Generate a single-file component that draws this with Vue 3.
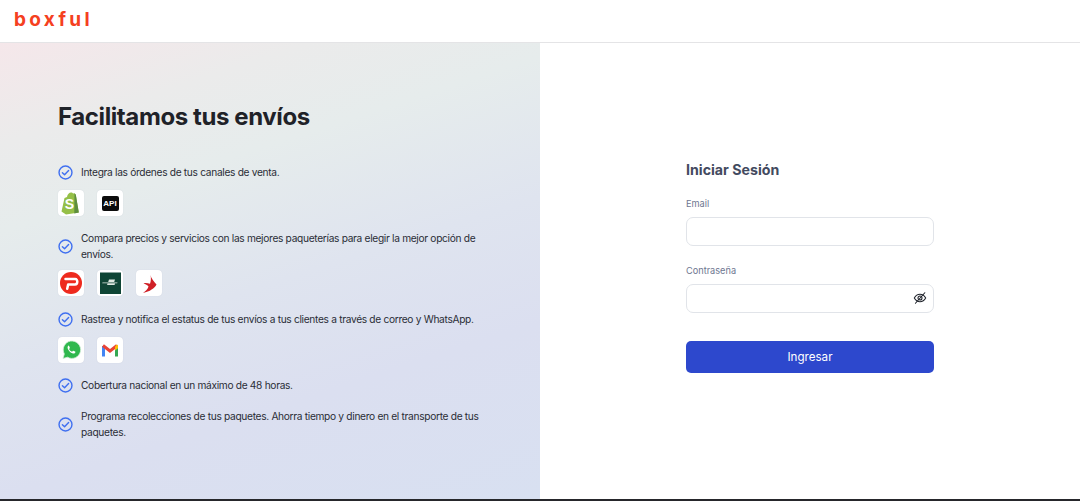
<script setup>
const checkItems = [
  { text: 'Integra las órdenes de tus canales de venta.', logos: ['shopify', 'api'] },
  {
    text: 'Compara precios y servicios con las mejores paqueterías para elegir la mejor opción de envíos.',
    logos: ['pedidos', 'green', 'swift'],
  },
  { text: 'Rastrea y notifica el estatus de tus envíos a tus clientes a través de correo y WhatsApp.', logos: ['whatsapp', 'gmail'] },
  { text: 'Cobertura nacional en un máximo de 48 horas.', logos: [] },
  { text: 'Programa recolecciones de tus paquetes. Ahorra tiempo y dinero en el transporte de tus paquetes.', logos: [] },
]
</script>

<template>
  <div class="page">
    <header class="topbar">
      <span class="logo">boxful</span>
    </header>
    <main class="split">
      <section class="promo">
        <h1 class="promo-title">Facilitamos tus envíos</h1>
        <ul class="features">
          <li v-for="item in checkItems" :key="item.text" class="feature">
            <div class="feature-row">
              <svg class="check" viewBox="0 0 16 16" fill="none">
                <circle cx="8" cy="8" r="6.9" stroke="#4070f0" stroke-width="1.5" />
                <path d="M4.700 8.200l2.300 2.300 4.300-4.600" stroke="#4070f0" stroke-width="1.5" stroke-linecap="round" stroke-linejoin="round" />
              </svg>
              <p class="feature-text">{{ item.text }}</p>
            </div>
            <div v-if="item.logos.length" class="logos">
              <span v-for="logo in item.logos" :key="logo" class="logo-tile">
                <svg v-if="logo === 'shopify'" viewBox="0 0 26 26" width="26" height="26">
                  <path d="M3.500 21.500L6.500 8l2.500-1C9.500 4 11.300 2.500 13 2.500c1 0 1.600.4 2 1l1.500-.3 1.300 1.500 3 17.800-12.800 2z" fill="#95bf47" />
                  <path d="M16.500 3.200l1.300 1.500 3 17.800-4.500 1z" fill="#5e8e3e" />
                  <text x="11.500" y="19" class="shopify-s">S</text>
                </svg>
                <span v-else-if="logo === 'api'" class="api-mark">API</span>
                <svg v-else-if="logo === 'pedidos'" viewBox="0 0 26 26" width="26" height="26">
                  <circle cx="13" cy="13" r="11" fill="#ee2a1e" />
                  <path d="M7.500 9h9.700c2.800 0 2.800 5.400-.2 5.400h-6.800M9.200 18.800l1-4.400" fill="none" stroke="#fff" stroke-width="2.500" stroke-linecap="round" stroke-linejoin="round" />
                </svg>
                <svg v-else-if="logo === 'green'" viewBox="0 0 26 26" width="26" height="26">
                  <rect x="3" y="2.500" width="21" height="21.500" fill="#0f4535" />
                  <path d="M12 9.500h6l-.8 2.500h-6zM5.500 12.500h15l-.3.7h-15zM10.500 13.500h7.500l-.4 1.500h-7.500z" fill="#dfe9e2" />
                </svg>
                <svg v-else-if="logo === 'swift'" viewBox="0 0 26 26" width="26" height="26">
                  <path d="M14.500 5c.3 3 3.500 6.500 6 9.500-2 3.800-6.500 7-13.500 8.500 2.500-1.800 5-4.300 5.500-6.500-1-1.200-3-2.500-5-3.200 2-.4 4.500-.2 6.500.5 1-2.800 1.200-6 .5-8.800z" fill="#cf2027" />
                </svg>
                <svg v-else-if="logo === 'whatsapp'" viewBox="0 0 26 26" width="26" height="26">
                  <path d="M5 21.500l1.300-4.600A8.700 8.700 0 1 1 9.500 20.200z" fill="#2fb84e" stroke="#d4eeda" stroke-width=".8" />
                  <path d="M10.500 8.800c-1 .5-1.200 2-.5 3.400 1 1.900 2.500 3.400 4.400 4.100 1.400.5 2.600.1 3-1 .1-.4 0-.7-.3-.8l-1.700-.8c-.3-.1-.5 0-.7.2l-.6.8c-1.300-.5-2.400-1.500-3-2.800l.6-.7c.2-.2.200-.4.100-.7l-.7-1.600c-.2-.4-.4-.4-.7-.3z" fill="#fff" />
                </svg>
                <svg v-else-if="logo === 'gmail'" viewBox="0 0 26 26" width="26" height="26">
                  <path d="M6.500 19.500V9" stroke="#4285f4" stroke-width="3" fill="none" />
                  <path d="M19.500 19.500V9" stroke="#34a853" stroke-width="3" fill="none" />
                  <path d="M6 8.500l7 5.500 7-5.500" stroke="#ea4335" stroke-width="3" fill="none" />
                  <path d="M18 9.500l2-2 1 .8v3l-3 2.200z" fill="#fbbc04" />
                </svg>
              </span>
            </div>
          </li>
        </ul>
      </section>

      <section class="auth">
        <form class="login" @submit.prevent>
          <h2 class="login-title">Iniciar Sesión</h2>
          <label class="field">
            <span class="field-label">Email</span>
            <input class="field-input" type="email" />
          </label>
          <label class="field">
            <span class="field-label">Contraseña</span>
            <span class="password-wrap">
              <input class="field-input" type="password" />
              <svg class="eye" viewBox="0 0 16 16" fill="none" stroke="#1d2129" stroke-width="1.200" stroke-linecap="round">
                <path d="M1.500 8C3 5.300 5.300 3.800 8 3.800s5 1.500 6.500 4.200c-1.500 2.700-3.800 4.200-6.500 4.200S3 10.700 1.500 8z" />
                <circle cx="8" cy="8" r="2.300" />
                <path d="M13.500 2L2.800 14" />
              </svg>
            </span>
          </label>
          <button class="submit" type="submit">Ingresar</button>
        </form>
      </section>
    </main>
    <div class="baseline"></div>
  </div>
</template>

<style>
html, body { margin: 0; background: #fff; }
</style>

<style scoped>
.page {
  display: flex;
  flex-direction: column;
  height: 501px;
  overflow: hidden;
  font-family: Inter, "Noto Sans", sans-serif;
  color: #23262f;
}
.topbar {
  display: flex;
  align-items: center;
  flex: none;
  height: 42px;
  padding-left: 14px;
  background: #fff;
  border-bottom: 1px solid #e4e4e6;
}
.logo {
  font-size: 19px;
  font-weight: 700;
  letter-spacing: 3.300px;
  color: #f5401f;
  line-height: 1;
  margin-top: -3px;
}
.split {
  display: flex;
  flex: 1;
  min-height: 0;
}
.promo {
  flex: none;
  box-sizing: border-box;
  width: 540px;
  padding: 59px 50px 0 58px;
  background: linear-gradient(162deg, #f5e7ea 0%, #ebebeb 16%, #e6ecec 30%, #dfe4ef 52%, #dbdff0 72%, #d8e0f1 100%);
}
.promo-title {
  margin: 0 0 30px;
  font-size: 24px;
  line-height: 30px;
  font-weight: 700;
  letter-spacing: -0.4px;
  color: #1f2228;
}
.features {
  display: flex;
  flex-direction: column;
  gap: 13px;
  margin: 0;
  padding: 0;
  list-style: none;
}
.feature:first-child { margin-bottom: 1px; }
.feature:nth-child(3) { margin-bottom: -1px; }
.feature-row {
  display: flex;
  align-items: center;
  gap: 8px;
  min-height: 20px;
}
.check { flex: none; width: 15px; height: 15px; margin-top: 1px; }
.feature-text {
  margin: 0;
  font-size: 10.200px;
  line-height: 16px;
  letter-spacing: -0.320px;
  color: #2a2d36;
}
.logos {
  display: flex;
  gap: 13px;
  margin-top: 8px;
}
.logo-tile {
  display: flex;
  align-items: center;
  justify-content: center;
  width: 26px;
  height: 26px;
  background: #fff;
  border-radius: 4px;
  box-shadow: 0 0 1px rgba(60, 70, 110, 0.18);
}
.shopify-s {
  font-family: "Liberation Sans", sans-serif;
  font-size: 14px;
  font-weight: 700;
  fill: #fff;
  text-anchor: middle;
}
.api-mark {
  width: 17px;
  height: 15px;
  background: #0c0c0c;
  border-radius: 2px;
  color: #fff;
  font-family: "Liberation Sans", sans-serif;
  font-size: 8px;
  font-weight: 700;
  line-height: 15px;
  text-align: center;
}
.auth {
  flex: 1;
  box-sizing: border-box;
  padding: 117px 0 0 146px;
  background: #fff;
}
.login { display: flex; flex-direction: column; width: 248px; }
.login-title {
  margin: 0 0 18px;
  font-size: 14.200px;
  line-height: 20px;
  font-weight: 700;
  color: #434a60;
}
.field { display: flex; flex-direction: column; margin-bottom: 19px; }
.field-label {
  font-size: 9.200px;
  line-height: 12px;
  margin-bottom: 7px;
  color: #6e7690;
}
.field-input {
  box-sizing: border-box;
  width: 100%;
  height: 29px;
  padding: 0 10px;
  border: 1px solid #e1e4e9;
  border-radius: 7px;
  background: #fff;
  outline: none;
}
.password-wrap { position: relative; display: block; }
.eye {
  position: absolute;
  top: 7px;
  right: 7px;
  width: 14px;
  height: 14px;
}
.submit {
  height: 32px;
  margin-top: 9px;
  border: 0;
  border-radius: 5px;
  padding-bottom: 2px;
  background: #2d48cd;
  color: #fff;
  font-family: inherit;
  font-size: 11.600px;
}
.baseline {
  flex: none;
  height: 2px;
  background: #26272b;
}
</style>
